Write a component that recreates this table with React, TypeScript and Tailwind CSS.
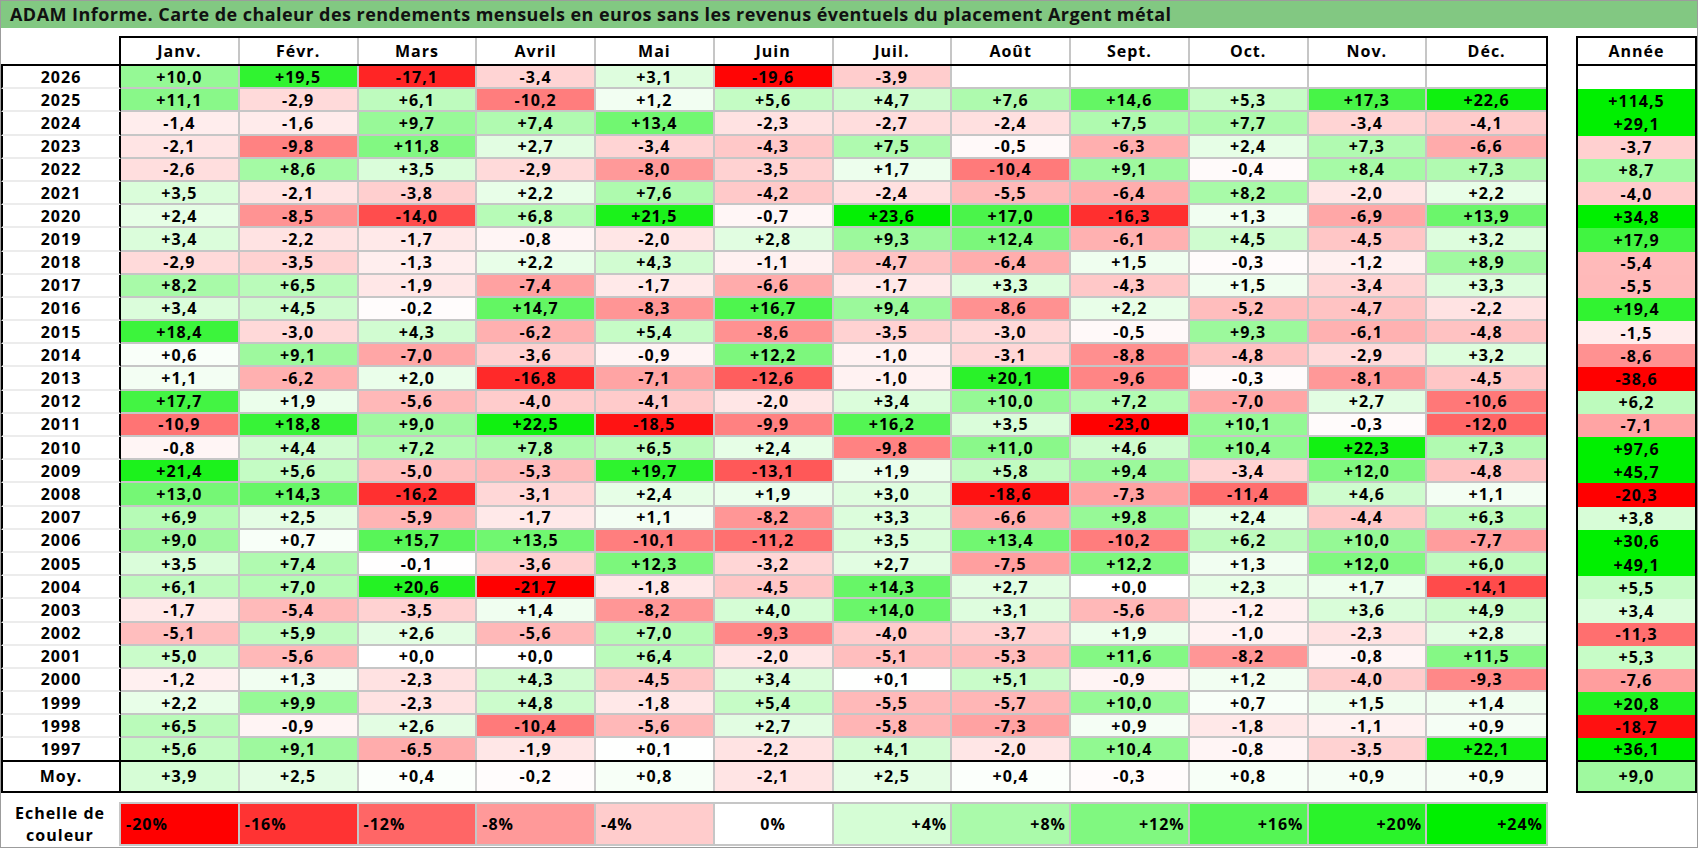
import React from "react";

const MONTHS = ["Janv.", "Févr.", "Mars", "Avril", "Mai", "Juin", "Juil.", "Août", "Sept.", "Oct.", "Nov.", "Déc."];

type Row = { year: string; m: (string | null)[]; y: string | null };

const raw: [string, string, string][] = [
  ["2026", "+10,0 +19,5 -17,1 -3,4 +3,1 -19,6 -3,9 _ _ _ _ _", "_"],
  ["2025", "+11,1 -2,9 +6,1 -10,2 +1,2 +5,6 +4,7 +7,6 +14,6 +5,3 +17,3 +22,6", "+114,5"],
  ["2024", "-1,4 -1,6 +9,7 +7,4 +13,4 -2,3 -2,7 -2,4 +7,5 +7,7 -3,4 -4,1", "+29,1"],
  ["2023", "-2,1 -9,8 +11,8 +2,7 -3,4 -4,3 +7,5 -0,5 -6,3 +2,4 +7,3 -6,6", "-3,7"],
  ["2022", "-2,6 +8,6 +3,5 -2,9 -8,0 -3,5 +1,7 -10,4 +9,1 -0,4 +8,4 +7,3", "+8,7"],
  ["2021", "+3,5 -2,1 -3,8 +2,2 +7,6 -4,2 -2,4 -5,5 -6,4 +8,2 -2,0 +2,2", "-4,0"],
  ["2020", "+2,4 -8,5 -14,0 +6,8 +21,5 -0,7 +23,6 +17,0 -16,3 +1,3 -6,9 +13,9", "+34,8"],
  ["2019", "+3,4 -2,2 -1,7 -0,8 -2,0 +2,8 +9,3 +12,4 -6,1 +4,5 -4,5 +3,2", "+17,9"],
  ["2018", "-2,9 -3,5 -1,3 +2,2 +4,3 -1,1 -4,7 -6,4 +1,5 -0,3 -1,2 +8,9", "-5,4"],
  ["2017", "+8,2 +6,5 -1,9 -7,4 -1,7 -6,6 -1,7 +3,3 -4,3 +1,5 -3,4 +3,3", "-5,5"],
  ["2016", "+3,4 +4,5 -0,2 +14,7 -8,3 +16,7 +9,4 -8,6 +2,2 -5,2 -4,7 -2,2", "+19,4"],
  ["2015", "+18,4 -3,0 +4,3 -6,2 +5,4 -8,6 -3,5 -3,0 -0,5 +9,3 -6,1 -4,8", "-1,5"],
  ["2014", "+0,6 +9,1 -7,0 -3,6 -0,9 +12,2 -1,0 -3,1 -8,8 -4,8 -2,9 +3,2", "-8,6"],
  ["2013", "+1,1 -6,2 +2,0 -16,8 -7,1 -12,6 -1,0 +20,1 -9,6 -0,3 -8,1 -4,5", "-38,6"],
  ["2012", "+17,7 +1,9 -5,6 -4,0 -4,1 -2,0 +3,4 +10,0 +7,2 -7,0 +2,7 -10,6", "+6,2"],
  ["2011", "-10,9 +18,8 +9,0 +22,5 -18,5 -9,9 +16,2 +3,5 -23,0 +10,1 -0,3 -12,0", "-7,1"],
  ["2010", "-0,8 +4,4 +7,2 +7,8 +6,5 +2,4 -9,8 +11,0 +4,6 +10,4 +22,3 +7,3", "+97,6"],
  ["2009", "+21,4 +5,6 -5,0 -5,3 +19,7 -13,1 +1,9 +5,8 +9,4 -3,4 +12,0 -4,8", "+45,7"],
  ["2008", "+13,0 +14,3 -16,2 -3,1 +2,4 +1,9 +3,0 -18,6 -7,3 -11,4 +4,6 +1,1", "-20,3"],
  ["2007", "+6,9 +2,5 -5,9 -1,7 +1,1 -8,2 +3,3 -6,6 +9,8 +2,4 -4,4 +6,3", "+3,8"],
  ["2006", "+9,0 +0,7 +15,7 +13,5 -10,1 -11,2 +3,5 +13,4 -10,2 +6,2 +10,0 -7,7", "+30,6"],
  ["2005", "+3,5 +7,4 -0,1 -3,6 +12,3 -3,2 +2,7 -7,5 +12,2 +1,3 +12,0 +6,0", "+49,1"],
  ["2004", "+6,1 +7,0 +20,6 -21,7 -1,8 -4,5 +14,3 +2,7 +0,0 +2,3 +1,7 -14,1", "+5,5"],
  ["2003", "-1,7 -5,4 -3,5 +1,4 -8,2 +4,0 +14,0 +3,1 -5,6 -1,2 +3,6 +4,9", "+3,4"],
  ["2002", "-5,1 +5,9 +2,6 -5,6 +7,0 -9,3 -4,0 -3,7 +1,9 -1,0 -2,3 +2,8", "-11,3"],
  ["2001", "+5,0 -5,6 +0,0 +0,0 +6,4 -2,0 -5,1 -5,3 +11,6 -8,2 -0,8 +11,5", "+5,3"],
  ["2000", "-1,2 +1,3 -2,3 +4,3 -4,5 +3,4 +0,1 +5,1 -0,9 +1,2 -4,0 -9,3", "-7,6"],
  ["1999", "+2,2 +9,9 -2,3 +4,8 -1,8 +5,4 -5,5 -5,7 +10,0 +0,7 +1,5 +1,4", "+20,8"],
  ["1998", "+6,5 -0,9 +2,6 -10,4 -5,6 +2,7 -5,8 -7,3 +0,9 -1,8 -1,1 +0,9", "-18,7"],
  ["1997", "+5,6 +9,1 -6,5 -1,9 +0,1 -2,2 +4,1 -2,0 +10,4 -0,8 -3,5 +22,1", "+36,1"],
];

const rows: Row[] = raw.map(([year, m, y]) => ({
  year,
  m: m.split(" ").map((v) => (v === "_" ? null : v)),
  y: y === "_" ? null : y,
}));

const avg = "+3,9 +2,5 +0,4 -0,2 +0,8 -2,1 +2,5 +0,4 -0,3 +0,8 +0,9 +0,9".split(" ");
const avgYear = "+9,0";

const legend = [-20, -16, -12, -8, -4, 0, 4, 8, 12, 16, 20, 24];

// excel style 3-colour scale: red at -20, white at 0, green at +24
function heat(v: string | number | null): string {
  if (v === null) return "#ffffff";
  const n = typeof v === "number" ? v : parseFloat(v.replace(",", "."));
  if (n < 0) {
    const t = Math.min(1, -n / 20);
    const c = Math.round(255 * (1 - t));
    return `rgb(255,${c},${c})`;
  }
  const t = Math.min(1, n / 24);
  const c = Math.round(255 * (1 - t));
  const g = Math.round(255 - 15 * t);
  return `rgb(${c},${g},${c})`;
}

const App = () => {
  return (
    <div className="w-[1698px] h-[848px] overflow-hidden border border-[#9c9c9c] bg-white font-['Open_Sans',sans-serif] font-bold text-black">
      <div className="flex h-[27px] items-center bg-[#82c882] pl-[9px] text-[18px] tracking-[0.45px] text-[#111]">
        ADAM Informe. Carte de chaleur des rendements mensuels en euros sans les revenus éventuels du placement Argent métal
      </div>

      <div className="mt-[8px] flex gap-[28px] text-[16px] tracking-[1px] leading-none">
        {/* main table */}
        <div className="w-[1547px] shrink-0">
          <div className="flex h-[30px] border-b-2 border-black">
            <div className="w-[118px] shrink-0" />
            <div className="grid flex-1 grid-cols-12 border-l-2 border-t-2 border-r-2 border-black">
              {MONTHS.map((m, i) => (
                <div
                  key={m}
                  className={`flex items-center justify-center border-[#c6c6c6] ${i < 11 ? "border-r-2" : ""}`}
                >
                  {m}
                </div>
              ))}
            </div>
          </div>

          {rows.map((r, ri) => {
            const last = ri === rows.length - 1;
            return (
              <div key={r.year} className="flex h-[23.2px]">
                <div
                  className={`flex w-[120px] shrink-0 items-center justify-center border-l-2 border-r-2 border-b-2 border-black ${
                    last ? "" : "border-b-[#ececec]"
                  }`}
                >
                  {r.year}
                </div>
                <div className={`grid flex-1 grid-cols-12 border-r-2 border-black ${last ? "border-b-2" : ""}`}>
                  {r.m.map((v, i) => (
                    <div
                      key={i}
                      className={`flex items-center justify-center border-[#c6c6c6] ${i < 11 ? "border-r-2" : ""} ${
                        last ? "" : "border-b-2"
                      }`}
                      style={{ backgroundColor: heat(v) }}
                    >
                      {v}
                    </div>
                  ))}
                </div>
              </div>
            );
          })}

          <div className="flex h-[31px]">
            <div className="flex w-[120px] shrink-0 items-center justify-center border-l-2 border-r-2 border-b-2 border-black">
              Moy.
            </div>
            <div className="grid flex-1 grid-cols-12 border-r-2 border-b-2 border-black">
              {avg.map((v, i) => (
                <div
                  key={i}
                  className={`flex items-center justify-center border-[#c6c6c6] ${i < 11 ? "border-r-2" : ""}`}
                  style={{ backgroundColor: heat(v) }}
                >
                  {v}
                </div>
              ))}
            </div>
          </div>

          <div className="mt-[9px] flex h-[44px]">
            <div className="flex w-[118px] shrink-0 flex-col items-center justify-center leading-[22px]">
              <span>Echelle de</span>
              <span>couleur</span>
            </div>
            <div className="grid flex-1 grid-cols-12 border-2 border-[#c6c6c6]">
              {legend.map((v, i) => (
                <div
                  key={v}
                  className={`flex items-center border-[#c6c6c6] ${i < 11 ? "border-r-2" : ""} ${
                    v < 0 ? "justify-start pl-[5px]" : v === 0 ? "justify-center" : "justify-end pr-[3px]"
                  }`}
                  style={{ backgroundColor: heat(v) }}
                >
                  {v > 0 ? `+${v}%` : `${v}%`}
                </div>
              ))}
            </div>
          </div>
        </div>

        {/* year column */}
        <div className="w-[121px] shrink-0">
          <div className="flex h-[30px] items-center justify-center border-2 border-black">Année</div>
          <div className="border-l-2 border-r-2 border-black">
            {rows.map((r, ri) => (
              <div
                key={r.year}
                className={`flex h-[23.2px] items-center justify-center ${
                  ri === rows.length - 1 ? "border-b-2 border-black" : ""
                }`}
                style={{ backgroundColor: heat(r.y) }}
              >
                {r.y}
              </div>
            ))}
          </div>
          <div
            className="flex h-[31px] items-center justify-center border-l-2 border-r-2 border-b-2 border-black"
            style={{ backgroundColor: heat(avgYear) }}
          >
            {avgYear}
          </div>
        </div>
      </div>
    </div>
  );
};

export default App;
